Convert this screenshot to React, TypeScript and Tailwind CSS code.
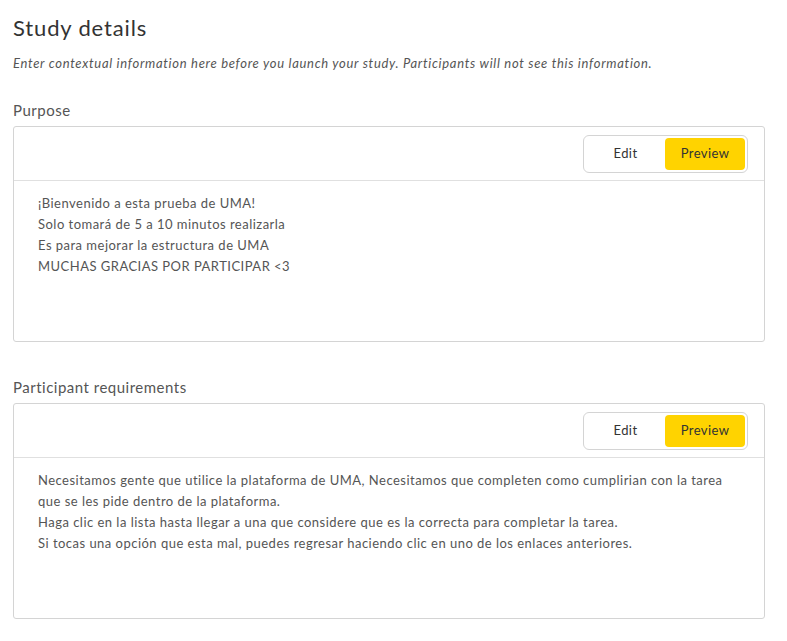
import React from "react";

function Toggle() {
  return (
    <div className="flex h-[38px] w-[165px] items-center rounded-[6px] border border-[#d4d4d4] bg-white p-[2px]">
      <div className="flex h-[32px] flex-1 items-center justify-center text-[13px] tracking-[0.4px] text-[#333]">Edit</div>
      <div className="flex h-[32px] w-[80px] items-center justify-center rounded-[4px] bg-[#ffd300] text-[13px] tracking-[0.4px] text-[#333]">Preview</div>
    </div>
  );
}

function Box({ lines }: { lines: string[] }) {
  return (
    <div className="h-[216px] w-[752px] rounded-[3px] border border-[#d4d4d4] bg-white">
      <div className="flex h-[54px] items-center justify-end border-b border-[#e0e0e0] pr-[16px]">
        <Toggle />
      </div>
      <div className="px-[24px] pt-[12px] text-[13px] leading-[21px] tracking-[0.48px] text-[#555]">
        {lines.map((l, i) => (
          <div key={i}>{l}</div>
        ))}
      </div>
    </div>
  );
}

export default function App() {
  return (
    <div className="min-h-[641px] w-[787px] bg-white px-[13px] font-['Lato',sans-serif]">
      <h1 className="pt-[13px] text-[22px] leading-[30px] tracking-[0.85px] text-[#333]">Study details</h1>
      <p className="mt-[11px] text-[13px] italic leading-[18px] tracking-[0.7px] text-[#555]">
        Enter contextual information here before you launch your study. Participants will not see this information.
      </p>
      <div className="mt-[28px] text-[15px] leading-[20px] tracking-[0.5px] text-[#555]">Purpose</div>
      <div className="mt-[6px]">
        <Box
          lines={[
            "¡Bienvenido a esta prueba de UMA!",
            "Solo tomará de 5 a 10 minutos realizarla",
            "Es para mejorar la estructura de UMA",
            "MUCHAS GRACIAS POR PARTICIPAR <3",
          ]}
        />
      </div>
      <div className="mt-[35px] text-[15px] leading-[20px] tracking-[0.5px] text-[#555]">Participant requirements</div>
      <div className="mt-[6px]">
        <Box
          lines={[
            "Necesitamos gente que utilice la plataforma de UMA, Necesitamos que completen como cumplirian con la tarea",
            "que se les pide dentro de la plataforma.",
            "Haga clic en la lista hasta llegar a una que considere que es la correcta para completar la tarea.",
            "Si tocas una opción que esta mal, puedes regresar haciendo clic en uno de los enlaces anteriores.",
          ]}
        />
      </div>
    </div>
  );
}
